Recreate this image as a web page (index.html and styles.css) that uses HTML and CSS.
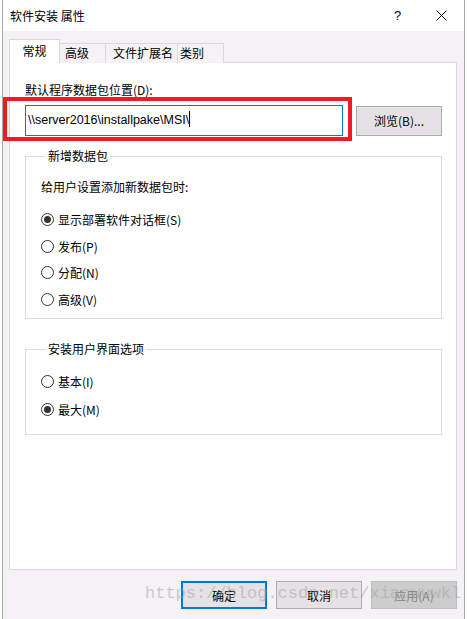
FILE: index.html
```html
<!DOCTYPE html>
<html>
<head>
    <title>软件安装 属性</title>
    <link rel="stylesheet" href="styles.css">
</head>
<body>
    <div class="window">
        <div class="titlebar">
            <span class="title">软件安装 属性</span>
            <span class="help">?</span>
            <span class="close">
                <svg width="11" height="11" viewBox="0 0 11 11"><path d="M0.5 0.5 L10.5 10.5 M10.5 0.5 L0.5 10.5" stroke="#000" stroke-width="1"/></svg>
            </span>
        </div>
        <div class="client">
            <div class="tabs">
                <div class="tab active">常规</div>
                <div class="tab">高级</div>
                <div class="tab">文件扩展名</div>
                <div class="tab">类别</div>
            </div>
            <div class="panel">
                <label class="field-label">默认程序数据包位置(D):</label>
                <div class="path-row">
                    <div class="textbox">\\server2016\installpake\MSI\<span class="caret"></span></div>
                    <button class="btn">浏览(B)...</button>
                    <div class="highlight"></div>
                </div>

                <fieldset class="group group-new">
                    <legend>新增数据包</legend>
                    <div class="hint">给用户设置添加新数据包时:</div>
                    <label class="radio"><input type="radio" name="deploy" checked>显示部署软件对话框(S)</label>
                    <label class="radio"><input type="radio" name="deploy">发布(P)</label>
                    <label class="radio"><input type="radio" name="deploy">分配(N)</label>
                    <label class="radio"><input type="radio" name="deploy">高级(V)</label>
                </fieldset>

                <fieldset class="group group-ui">
                    <legend>安装用户界面选项</legend>
                    <label class="radio"><input type="radio" name="ui">基本(I)</label>
                    <label class="radio"><input type="radio" name="ui" checked>最大(M)</label>
                </fieldset>
            </div>
            <div class="buttons">
                <button class="btn default">确定</button>
                <button class="btn">取消</button>
                <button class="btn" disabled>应用(A)</button>
                <div class="watermark">https://blog.csdn.net/xiaowuwkl</div>
            </div>
        </div>
    </div>
</body>
</html>
```

FILE: styles.css
```css
* {
    box-sizing: border-box;
}
html, body {
    margin: 0;
    padding: 0;
    background: #fff;
}
body {
    font-family: "Noto Sans CJK SC", "Liberation Sans", sans-serif;
    font-size: 12px;
    color: #000;
}
.window {
    margin-left: 2px;
    width: 463px;
    height: 619px;
    border-left: 1px solid #a9a9a9;
    border-right: 1px solid #a9a9a9;
    display: flex;
    flex-direction: column;
}
.titlebar {
    height: 31px;
    background: #fff;
    display: flex;
    align-items: center;
    padding-left: 7px;
    flex-shrink: 0;
}
.title {
    flex: 1;
}
.help {
    font-family: "Liberation Sans", sans-serif;
    font-size: 13px;
    width: 12px;
    margin-right: 30px;
}
.close {
    width: 11px;
    height: 11px;
    margin-right: 17px;
    display: flex;
}
.client {
    flex: 1;
    background: #f5f2f5;
    padding: 9px 7px 0 6px;
    display: flex;
    flex-direction: column;
}
.tabs {
    display: flex;
    align-items: flex-end;
    height: 23px;
    position: relative;
    z-index: 1;
    margin-bottom: -1px;
}
.tab {
    height: 20px;
    line-height: 18px;
    padding-left: 5px;
    border: 1px solid #d9d9d9;
    border-bottom: none;
    border-left: none;
    background: #f5f2f5;
    white-space: nowrap;
}
.tab.active {
    height: 24px;
    line-height: 22px;
    width: 51px;
    padding-left: 0;
    text-align: center;
    border-left: 1px solid #d9d9d9;
    background: #fff;
}
.tab:nth-child(2) { width: 46px; }
.tab:nth-child(3) { width: 72px; padding-left: 7px; }
.tab:nth-child(4) { width: 46px; padding-left: 2px; }
.panel {
    height: 508px;
    background: #fff;
    border: 1px solid #d9d9d9;
    padding: 19px 13px 0 15px;
    display: flex;
    flex-direction: column;
}
.field-label {
    line-height: 16px;
}
.path-row {
    display: flex;
    align-items: center;
    margin-top: 7px;
    position: relative;
}
.textbox {
    width: 318px;
    height: 31px;
    border: 1px solid #0078d7;
    line-height: 29px;
    padding-left: 2px;
    font-family: "Liberation Sans", sans-serif;
    font-size: 12.5px;
    white-space: nowrap;
}
.caret {
    display: inline-block;
    width: 1px;
    height: 16px;
    background: #000;
    vertical-align: -3px;
}
.highlight {
    position: absolute;
    left: -22px;
    top: -8px;
    width: 349px;
    height: 44px;
    border: 4px solid #ed1c24;
}
.btn {
    font-family: "Noto Sans CJK SC", "Liberation Sans", sans-serif;
    font-size: 12px;
    color: #000;
    background: #e5e1e5;
    border: 1px solid #adadad;
    width: 86px;
    height: 30px;
    padding: 0;
    margin-left: 13px;
}
.group {
    margin: 0;
    border: 1px solid #dcdcdc;
    width: 417px;
    padding: 0 0 0 15px;
}
.group legend {
    padding: 0 2px;
    margin-left: 5px;
    line-height: 16px;
}
.group-new {
    margin-top: 12px;
    height: 171px;
}
.hint {
    margin-top: 15px;
    line-height: 16px;
    margin-bottom: 11px;
}
.radio {
    display: flex;
    align-items: center;
    height: 26.7px;
}
.radio input {
    appearance: none;
    -webkit-appearance: none;
    width: 13px;
    height: 13px;
    margin: 0 4px 0 0;
    border: 1px solid #333;
    border-radius: 50%;
    background: #fff;
    position: relative;
}
.radio input:checked::after {
    content: "";
    position: absolute;
    left: 2px;
    top: 2px;
    width: 7px;
    height: 7px;
    border-radius: 50%;
    background: #333;
}
.group-ui {
    margin-top: 22px;
    height: 94px;
    padding-top: 10px;
}
.group-ui .radio {
    height: 28px;
}
.buttons {
    display: flex;
    justify-content: flex-end;
    align-items: center;
    margin-top: 11px;
    position: relative;
}
.buttons .btn {
    width: 86px;
    height: 28px;
    margin-left: 9px;
}
.buttons .btn.default {
    border: 2px solid #0078d7;
}
.buttons .btn:disabled {
    background: #cccccc;
    border-color: #bfbfbf;
    color: #838383;
}
.watermark {
    position: absolute;
    left: 136px;
    top: 3px;
    font-family: "Liberation Mono", monospace;
    font-size: 17px;
    color: rgba(160, 160, 160, 0.5);
    pointer-events: none;
    white-space: nowrap;
}
```
